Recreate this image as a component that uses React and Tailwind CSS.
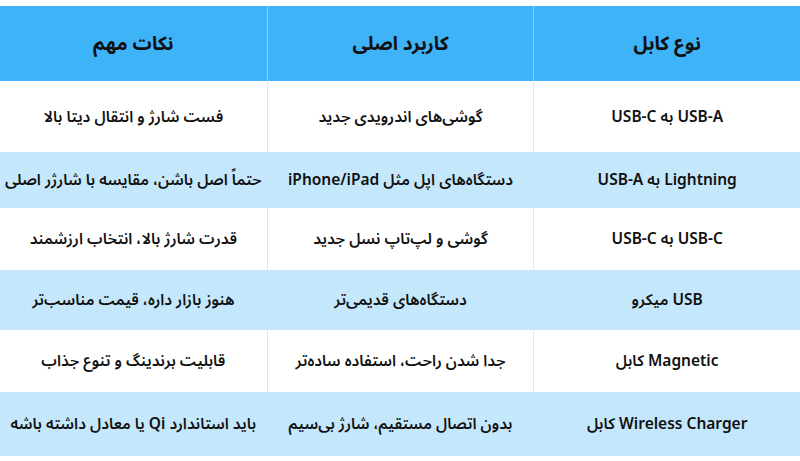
const rows = [
  { type: "USB-A به USB-C", use: "گوشی‌های اندرویدی جدید", note: "فست شارژ و انتقال دیتا بالا", h: "h-[71px]" },
  { type: "Lightning به USB-A", use: "دستگاه‌های اپل مثل iPhone/iPad", note: "حتماً اصل باشن، مقایسه با شارژر اصلی", h: "h-[56px]" },
  { type: "USB-C به USB-C", use: "گوشی و لپ‌تاپ نسل جدید", note: "قدرت شارژ بالا، انتخاب ارزشمند", h: "h-[62px]" },
  { type: "USB میکرو", use: "دستگاه‌های قدیمی‌تر", note: "هنوز بازار داره، قیمت مناسب‌تر", h: "h-[60px]" },
  { type: "Magnetic کابل", use: "جدا شدن راحت، استفاده ساده‌تر", note: "قابلیت برندینگ و تنوع جذاب", h: "h-[62px]" },
  { type: "Wireless Charger کابل", use: "بدون اتصال مستقیم، شارژ بی‌سیم", note: "باید استاندارد Qi یا معادل داشته باشه", h: "h-[64px]" },
];

export default function App() {
  return (
    <div
      dir="rtl"
      className="w-[800px] h-[461px] bg-white pt-[6px] text-[#111]"
      style={{ fontFamily: '"Noto Sans", "Noto Sans Arabic", "DejaVu Sans", sans-serif' }}
    >
      <div className="grid grid-cols-3 h-[75px] bg-[#3fb3f8] text-[19px] font-bold">
        <div className="flex items-center justify-center border-l border-[#86cffa]">نوع کابل</div>
        <div className="flex items-center justify-center border-l border-[#86cffa]">کاربرد اصلی</div>
        <div className="flex items-center justify-center">نکات مهم</div>
      </div>
      {rows.map((r, i) => {
        const blue = i % 2 === 1;
        const line = blue ? "border-[#c4e7fb]" : "border-[#e6e6e6]";
        return (
          <div
            key={i}
            className={`grid grid-cols-3 ${r.h} text-[15.5px] font-semibold ${blue ? "bg-[#c4e7fb]" : "bg-white"}`}
          >
            <div className={`flex items-center justify-center border-l ${line}`}>{r.type}</div>
            <div className={`flex items-center justify-center border-l ${line}`}>{r.use}</div>
            <div className="flex items-center justify-center whitespace-nowrap">{r.note}</div>
          </div>
        );
      })}
    </div>
  );
}
